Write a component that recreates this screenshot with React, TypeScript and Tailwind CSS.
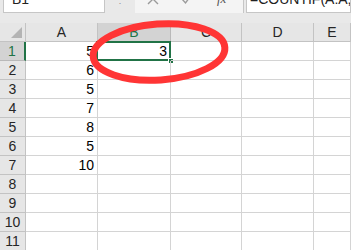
import React from 'react';

const cols = ['A', 'B', 'C', 'D', 'E'];
const colA: Record<number, string> = { 1: '5', 2: '6', 3: '5', 4: '7', 5: '8', 6: '5', 7: '10' };

const App: React.FC = () => {
  const rows = Array.from({ length: 11 }, (_, i) => i + 1);

  return (
    <div className="relative w-[351px] h-[250px] overflow-hidden bg-white font-['Liberation_Sans',Arial,sans-serif] text-[14px] text-[#222]">
      {/* formula bar, top half is cut off by the window */}
      <div className="h-[23px] bg-[#e9e9e9] overflow-hidden">
        <div className="flex h-[28px] -mt-[15px]">
          <div className="ml-[3px] w-[102px] h-full bg-white border border-[#c6c6c6] flex items-center pl-[8px] leading-none">
            B1
          </div>
          <div className="w-[30px] h-full flex items-center justify-center text-[#9a9a9a] text-[10px]">⋮</div>
          <div className="w-[108px] h-full bg-[#f4f4f4] flex items-center text-[#9a9a9a]">
            <svg className="ml-[12px]" width="12" height="12" viewBox="0 0 12 12" fill="none" stroke="currentColor" strokeWidth="1.4">
              <path d="M1 1 L11 11 M11 1 L1 11" />
            </svg>
            <svg className="ml-[22px]" width="12" height="12" viewBox="0 0 12 12" fill="none" stroke="currentColor" strokeWidth="1.4">
              <path d="M1 6 L4.5 10 L11 1" />
            </svg>
            <span className="ml-[24px] italic text-[13px] text-[#555] font-['Liberation_Serif',serif]">fx</span>
          </div>
          <div className="w-px h-full bg-[#c6c6c6]" />
          <div className="ml-[2px] flex-1 h-full bg-white border border-[#c6c6c6] flex items-center pl-[3px] whitespace-nowrap overflow-hidden">
            =COUNTIF(A:A,A1)
          </div>
        </div>
      </div>

      {/* sheet grid */}
      <div className="grid grid-cols-[26px_72px_73px_71px_72px_1fr] auto-rows-[19px]">
        <div className="relative bg-[#e6e6e6] border-r border-b border-[#c3c3c3]">
          <div className="absolute right-[3px] bottom-[3px] w-0 h-0 border-l-[11px] border-l-transparent border-b-[11px] border-b-[#b4b4b4]" />
        </div>
        {cols.map((c) => (
          <div
            key={c}
            className={
              c === 'B'
                ? 'bg-[#d3d3d3] border-r border-b border-[#b9b9b9] flex items-center justify-center text-[#217346]'
                : 'bg-[#e6e6e6] border-r border-b border-[#c3c3c3] flex items-center justify-center text-[#262626]'
            }
          >
            {c}
          </div>
        ))}

        {rows.map((r) => (
          <React.Fragment key={r}>
            <div
              className={
                r === 1
                  ? 'bg-[#d3d3d3] border-r-2 border-r-[#217346] border-b border-b-[#b9b9b9] flex items-center justify-center text-[#217346]'
                  : 'bg-[#e6e6e6] border-r border-b border-[#c3c3c3] flex items-center justify-center text-[#262626]'
              }
            >
              {r}
            </div>
            {cols.map((c) => (
              <div
                key={c}
                className="relative border-r border-b border-[#d4d4d4] flex items-center justify-end pr-[3px] text-black"
              >
                {c === 'A' ? colA[r] : c === 'B' && r === 1 ? '3' : ''}
                {c === 'B' && r === 1 && (
                  <>
                    <div className="absolute -left-[2px] -top-[1px] -right-px -bottom-px border-2 border-[#217346]" />
                    <div className="absolute -right-[4px] -bottom-[4px] w-[6px] h-[6px] bg-[#217346] border border-white" />
                  </>
                )}
              </div>
            ))}
          </React.Fragment>
        ))}
      </div>

      {/* hand-drawn red circle annotation */}
      <svg className="absolute left-0 top-0 pointer-events-none" width="351" height="250" viewBox="0 0 351 250">
        <ellipse
          cx="159"
          cy="52"
          rx="66"
          ry="28"
          transform="rotate(-4 159 52)"
          fill="none"
          stroke="#ff3535"
          strokeWidth="7"
        />
      </svg>
    </div>
  );
};

export default App;
